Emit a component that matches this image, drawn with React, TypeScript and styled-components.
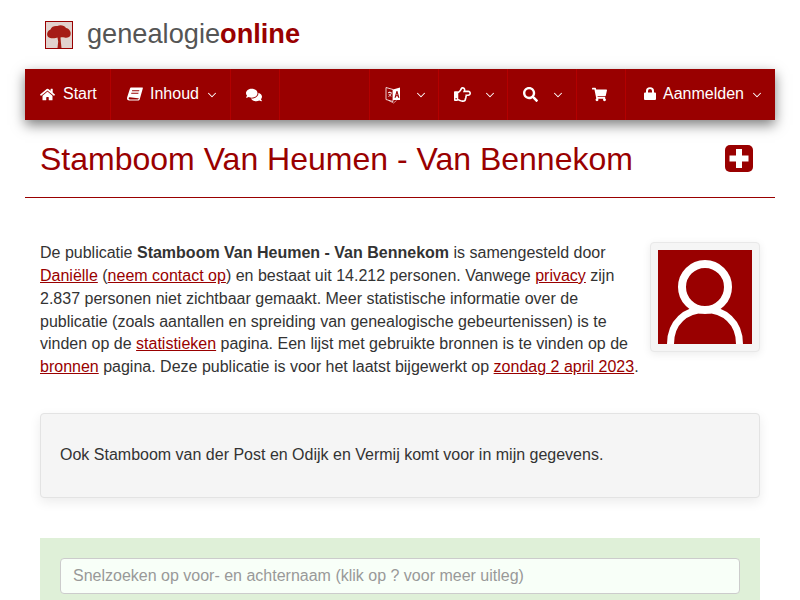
import React from "react";
import styled, { createGlobalStyle } from "styled-components";
import { FaHome, FaComments, FaRegHandPointRight, FaSearch, FaShoppingCart } from "react-icons/fa";
import { LuChevronDown } from "react-icons/lu";

const Global = createGlobalStyle`
  html, body { margin: 0; padding: 0; height: 600px; overflow: hidden; background: #fff; }
  body { font-family: "Liberation Sans", Arial, sans-serif; font-size: 16px; line-height: 22.85px; color: #333; }
  * { box-sizing: border-box; }
`;
const Page = styled.div`width: 750px; margin: 0 auto;`;
const Brand = styled.div`height: 69px; padding: 21px 0 0 20px; display: flex; align-items: flex-start; gap: 14px;`;
const LogoBox = styled.svg`width: 28px; height: 28px; display: block;`;
const BrandText = styled.div`font-size: 27.2px; line-height: 26px; color: #555; strong { color: #990000; font-weight: 700; }`;
const Nav = styled.nav`height: 51px; background: #990000; display: flex; box-shadow: 0 5px 12px rgba(0,0,0,.5); color: #fff;`;
const NavItem = styled.div<{ $w: number; $last?: boolean }>`
  width: ${p => p.$w}px; flex: none; display: flex; align-items: center; padding-left: 15px; gap: 8px;
  border-right: ${p => (p.$last ? "none" : "1px solid #b30000")}; white-space: nowrap;
  svg { flex: none; }
`;
const Spacer = styled.div`width: 90px; flex: none; border-right: 1px solid #b30000;`;
const Chevron = styled(LuChevronDown)<{ $ml: number }>`margin-left: ${p => p.$ml}px; stroke-width: 1.8;`;
const TitleRow = styled.header`height: 78px; border-bottom: 1px solid #990000; padding: 0 22px 0 15px; display: flex; align-items: flex-start; justify-content: space-between;`;
const Title = styled.h1`margin: 20px 0 0; font-size: 32px; line-height: 38px; font-weight: 400; color: #990000; white-space: nowrap;`;
const PlusIcon = styled.svg`width: 28px; height: 27px; margin-top: 25px; display: block;`;
const Content = styled.main`padding: 44px 15px 0;`;
const Intro = styled.section`display: flex; gap: 10px; align-items: flex-start; min-height: 144px;`;
const IntroText = styled.p`margin: 0; flex: 1; a { color: #990000; text-decoration: underline; } b { font-weight: 700; }`;
const Thumb = styled.div`flex: none; width: 110px; height: 110px; padding: 7px; background: #f5f5f5; border: 1px solid #e8e8e8; border-radius: 4px; box-shadow: 0 2px 8px rgba(0,0,0,.08);`;
const Avatar = styled.svg`display: block; width: 94px; height: 94px;`;
const Well = styled.div`margin-top: 27px; height: 85px; padding: 0 19px; display: flex; align-items: center; background: #f5f5f5; border: 1px solid #e3e3e3; border-radius: 4px; box-shadow: 0 4px 12px rgba(0,0,0,.08);`;
const Search = styled.div`margin-top: 40px; height: 120px; padding: 20px; background: #dff0d8;`;
const Input = styled.input`width: 100%; height: 36px; padding: 6px 12px; font: 16px "Liberation Sans", Arial, sans-serif; color: #555; background: #f8fff8; border: 1px solid #ccc; border-radius: 4px; &::placeholder { color: #999; opacity: 1; }`;
const LockSvg = styled.svg`margin: 0 -1px 3px 3px;`;
const BookSvg = styled.svg`margin: 0 -1px 0 1px;`;

const BookIcon = () => (
  <BookSvg width="16" height="15" viewBox="0 0 16 15" fill="#fff">
    <path d="M4 0.5h11.2c.5 0 .8.4.6 1L12.8 12c-.3 1-.9 1.6-2 1.6H2.2C1 13.6 0 12.6 0 11.3c0-.4.1-.7.2-1L3 1.600C3.200.9 3.500.5 4 .5zM5.200 3.300l-.3 1h7.200l.3-1zM4.400 5.800l-.3 1h7.200l.3-1zM2.700 10.200c-1.300 0-1.500 2.200 0 2.200h8.100c.4 0 .7-.2.8-.6l.2-.8c-.2.1-.5.2-.8.200z" fillRule="evenodd" />
  </BookSvg>
);
const LanguageIcon = () => (
  <svg width="16" height="18" viewBox="0 0 16 18">
    <path d="M1 1.500l7 2v12l-7-2z" fill="none" stroke="#fff" strokeWidth="1" opacity=".8" />
    <path d="M3 6.500h3.500M4.800 5.500v1.500M3.400 10.500c1.500-.7 2.600-2 3-3.600M3.700 7.800c.5 1 1.400 2 2.600 2.500" fill="none" stroke="#fff" strokeWidth=".8" />
    <path d="M8 3.500l7-2v12.500H8z" fill="#fff" />
    <path d="M9.500 11.800l2-6.800h.9l2 6.800h-1.300l-.4-1.500h-1.600l-.4 1.500zM11.400 9.300h1.100l-.5-2z" fill="#990000" />
    <path d="M3.500 14.500l5 2.500 3-2.500" fill="none" stroke="#fff" strokeWidth=".8" opacity=".7" />
  </svg>
);
const LockIcon = () => (
  <LockSvg width="12" height="13" viewBox="0 0 12 14" fill="#fff" preserveAspectRatio="none">
    <path d="M2 6V4.200a4 4 0 0 1 8 0V6h1c.600 0 1 .4 1 1v6c0 .6-.4 1-1 1H1c-.6 0-1-.4-1-1V7c0-.6.400-1 1-1zM4 6h4V4.200a2 2 0 0 0-4 0z" fillRule="evenodd" />
  </LockSvg>
);

export default function App() {
  return (
    <Page>
      <Global />
      <Brand>
        <LogoBox viewBox="0 0 28 28">
          <defs><filter id="soft"><feGaussianBlur stdDeviation=".7" /></filter></defs>
          <rect x="1" y="1" width="26" height="26" fill="#e2d2ce" />
          <path filter="url(#soft)" d="M2.500 15c-1-3 .5-5.500 3-6.500 1-3 4-4 7-3.500 3-1.500 7-.5 8.500 2 3 .5 5.500 3.500 4.500 7-.5 2.500-3.500 3-6 2.500-2-.5-3-.5-4 0l.3 4 .7 6.500h-4l.7-6.500-.7-4c-2 1-9 1.500-10-1.500z" fill="#a51d12" />
          <rect x=".5" y=".5" width="27" height="27" fill="none" stroke="#990000" />
        </LogoBox>
        <BrandText>genealogie<strong>online</strong></BrandText>
      </Brand>
      <Nav>
        <NavItem $w={86}><FaHome size={15} />Start</NavItem>
        <NavItem $w={120}><BookIcon />Inhoud<Chevron size={14} $ml={-2} /></NavItem>
        <NavItem $w={49}><FaComments size={16} /></NavItem>
        <Spacer />
        <NavItem $w={69}><LanguageIcon /><Chevron size={14} $ml={5} /></NavItem>
        <NavItem $w={69}><FaRegHandPointRight size={17} /><Chevron size={14} $ml={4} /></NavItem>
        <NavItem $w={69}><FaSearch size={15} /><Chevron size={14} $ml={5} /></NavItem>
        <NavItem $w={49}><FaShoppingCart size={15} /></NavItem>
        <NavItem $w={149} $last><LockIcon />Aanmelden<Chevron size={14} $ml={-2} /></NavItem>
      </Nav>
      <TitleRow>
        <Title>Stamboom Van Heumen - Van Bennekom</Title>
        <PlusIcon viewBox="0 0 28 27">
          <rect width="28" height="27" rx="5" fill="#990000" />
          <path d="M11 4h6v6.500h6.500v6H17V23h-6v-6.500H4.500v-6H11z" fill="#fff" />
        </PlusIcon>
      </TitleRow>
      <Content>
        <Intro>
          <IntroText>
            De publicatie <b>Stamboom Van Heumen - Van Bennekom</b> is samengesteld door <a>Daniëlle</a> (<a>neem contact op</a>) en bestaat uit 14.212 personen. Vanwege <a>privacy</a> zijn 2.837 personen niet zichtbaar gemaakt. Meer statistische informatie over de publicatie (zoals aantallen en spreiding van genealogische gebeurtenissen) is te vinden op de <a>statistieken</a> pagina. Een lijst met gebruikte bronnen is te vinden op de <a>bronnen</a> pagina. Deze publicatie is voor het laatst bijgewerkt op <a>zondag 2 april 2023</a>.
          </IntroText>
          <Thumb>
            <Avatar viewBox="0 0 94 94">
              <rect width="94" height="94" fill="#990000" />
              <circle cx="47" cy="37" r="23" fill="none" stroke="#fff" strokeWidth="8" />
              <path d="M12.500 94C12.500 72 28 59.500 47 59.500S81.500 72 81.500 94" fill="none" stroke="#fff" strokeWidth="7" />
            </Avatar>
          </Thumb>
        </Intro>
        <Well>Ook Stamboom van der Post en Odijk en Vermij komt voor in mijn gegevens.</Well>
        <Search><Input placeholder="Snelzoeken op voor- en achternaam (klik op ? voor meer uitleg)" /></Search>
      </Content>
    </Page>
  );
}
